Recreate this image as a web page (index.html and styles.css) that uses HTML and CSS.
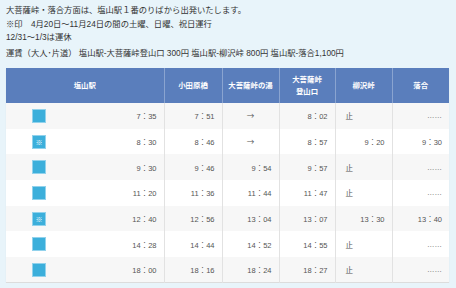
FILE: index.html
```html
<!DOCTYPE html>
<html lang="ja">
<head>
<meta charset="utf-8">
<link rel="stylesheet" href="styles.css">
</head>
<body>
<div class="page">
  <div class="notes">
    <p>大菩薩峠・落合方面は、塩山駅１番のりばから出発いたします。</p>
    <p>※印　4月20日～11月24日の間の土曜、日曜、祝日運行</p>
    <p>12/31～1/3は運休</p>
    <p class="fare">運賃（大人･片道） 塩山駅-大菩薩峠登山口 300円 塩山駅-柳沢峠 800円 塩山駅-落合1,100円</p>
  </div>
  <table class="tt">
    <colgroup>
      <col class="c-icon"><col class="c-time"><col class="c2"><col class="c3"><col class="c4"><col class="c5"><col class="c6">
    </colgroup>
    <thead>
      <tr>
        <th colspan="2">塩山駅</th>
        <th>小田原橋</th>
        <th>大菩薩峠の湯</th>
        <th>大菩薩峠<br>登山口</th>
        <th>柳沢峠</th>
        <th>落合</th>
      </tr>
    </thead>
    <tbody>
      <tr><td class="ic"><span class="sq"></span></td><td class="t">7：35</td><td class="t">7：51</td><td class="ar">→</td><td class="t">8：02</td><td class="st">止</td><td class="dot">……</td></tr>
      <tr><td class="ic"><span class="sq">※</span></td><td class="t">8：30</td><td class="t">8：46</td><td class="ar">→</td><td class="t">8：57</td><td class="t">9：20</td><td class="t">9：30</td></tr>
      <tr><td class="ic"><span class="sq"></span></td><td class="t">9：30</td><td class="t">9：46</td><td class="t">9：54</td><td class="t">9：57</td><td class="st">止</td><td class="dot">……</td></tr>
      <tr><td class="ic"><span class="sq"></span></td><td class="t">11：20</td><td class="t">11：36</td><td class="t">11：44</td><td class="t">11：47</td><td class="st">止</td><td class="dot">……</td></tr>
      <tr><td class="ic"><span class="sq">※</span></td><td class="t">12：40</td><td class="t">12：56</td><td class="t">13：04</td><td class="t">13：07</td><td class="t">13：30</td><td class="t">13：40</td></tr>
      <tr><td class="ic"><span class="sq"></span></td><td class="t">14：28</td><td class="t">14：44</td><td class="t">14：52</td><td class="t">14：55</td><td class="st">止</td><td class="dot">……</td></tr>
      <tr><td class="ic"><span class="sq"></span></td><td class="t">18：00</td><td class="t">18：16</td><td class="t">18：24</td><td class="t">18：27</td><td class="st">止</td><td class="dot">……</td></tr>
    </tbody>
  </table>
</div>
</body>
</html>
```
FILE: styles.css
```css
html, body {
  margin: 0;
  padding: 0;
  background: #e8f4fa;
}
.page {
  padding: 4px 7px 0 6px;
  font-family: "Liberation Sans", "Noto Sans CJK JP", sans-serif;
  color: #333;
}
.notes p {
  margin: 0;
  font-size: 8.3px;
  line-height: 13.5px;
}
.notes p.fare {
  margin-top: 2px;
}
.tt {
  margin-top: 8px;
  width: 443px;
  table-layout: fixed;
  border-collapse: collapse;
  background: #fff;
  box-shadow: 0 1px 1px rgba(0,0,0,0.08);
  border-bottom: 1px solid #dcdcdc;
}
.c-icon { width: 67px; }
.c-time { width: 91px; }
.c2 { width: 58px; }
.c3 { width: 57px; }
.c4 { width: 56px; }
.c5 { width: 57px; }
.c6 { width: 57px; }
.tt th {
  background: #5a7ebc;
  color: #fff;
  font-size: 7.4px;
  font-weight: bold;
  line-height: 12px;
  height: 35px;
  padding: 0;
  text-align: center;
  border-left: 1px solid #8aa4d0;
  box-sizing: border-box;
}
.tt th:first-child { border-left: none; }
.tt td {
  height: 25.7px;
  padding: 0 7px;
  font-size: 7.5px;
  color: #555;
  border-left: 1px solid #e2e2e2;
  box-sizing: border-box;
}
.tt tbody tr:nth-child(odd) td { background: #f7f7f7; }
.tt td.ic { border-left: none; padding: 0 0 0 26px; }
.tt td.ic + td { border-left: none; }
.t { text-align: right; }
.ar {
  text-align: center;
  color: #666;
  font-family: "Noto Sans CJK JP", sans-serif;
}
.st { text-align: left; padding-left: 10px !important; color: #777; }
.dot { text-align: right; color: #aaa; }
.sq {
  display: block;
  width: 14px;
  height: 14px;
  box-sizing: border-box;
  background: #3cafdb;
  border: 1px solid #92d2ec;
  color: #fff;
  font-family: "Noto Sans CJK JP", sans-serif;
  font-size: 7px;
  line-height: 12px;
  text-align: center;
}
```
